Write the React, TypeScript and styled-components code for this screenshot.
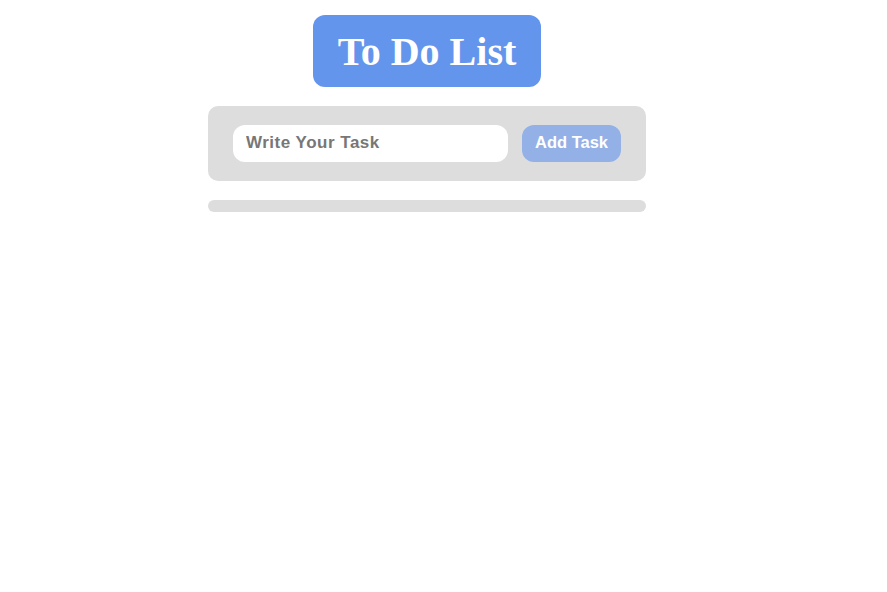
import React, { useState } from "react";
import styled, { createGlobalStyle } from "styled-components";

const Global = createGlobalStyle`
  html, body { margin: 0; padding: 0; background: #fff; }
  * { box-sizing: border-box; }
`;

const Page = styled.div`
  width: 854px;
  padding-top: 15px;
  display: flex;
  flex-direction: column;
  align-items: center;
`;

const Title = styled.h1`
  margin: 0;
  width: 228px;
  height: 72px;
  display: flex;
  align-items: center;
  justify-content: center;
  background: #6495ed;
  color: #fff;
  border-radius: 12px;
  font-family: "Liberation Serif", "Times New Roman", serif;
  font-weight: bold;
  font-size: 40px;
`;

const Form = styled.form`
  margin-top: 19px;
  width: 438px;
  height: 75px;
  background: #dddddd;
  border-radius: 10px;
  padding: 0 25px;
  display: flex;
  align-items: center;
  gap: 14px;
`;

const Input = styled.input`
  flex: 1;
  height: 37px;
  border: none;
  outline: none;
  border-radius: 12px;
  background: #fff;
  padding: 0 13px 2px;
  font-family: "Liberation Sans", Arial, sans-serif;
  font-weight: bold;
  font-size: 17px;
  letter-spacing: 0.5px;
  color: #333;
  &::placeholder { color: #777; opacity: 1; }
`;

const Button = styled.button`
  width: 99px;
  height: 37px;
  border: none;
  border-radius: 12px;
  background: #93b1e6;
  color: #fff;
  padding: 0 0 2px;
  font-family: "Liberation Sans", Arial, sans-serif;
  font-weight: bold;
  font-size: 16.5px;
  cursor: pointer;
`;

const List = styled.ul`
  margin: 19px 0 0;
  padding: 0;
  list-style: none;
  width: 438px;
  min-height: 12px;
  background: #dddddd;
  border-radius: 6px;
`;

export default function App() {
  const [task, setTask] = useState("");
  return (
    <>
      <Global />
      <Page>
        <Title>To Do List</Title>
        <Form onSubmit={(e) => e.preventDefault()}>
          <Input
            placeholder="Write Your Task"
            value={task}
            onChange={(e) => setTask(e.target.value)}
          />
          <Button type="submit">Add Task</Button>
        </Form>
        <List />
      </Page>
    </>
  );
}
